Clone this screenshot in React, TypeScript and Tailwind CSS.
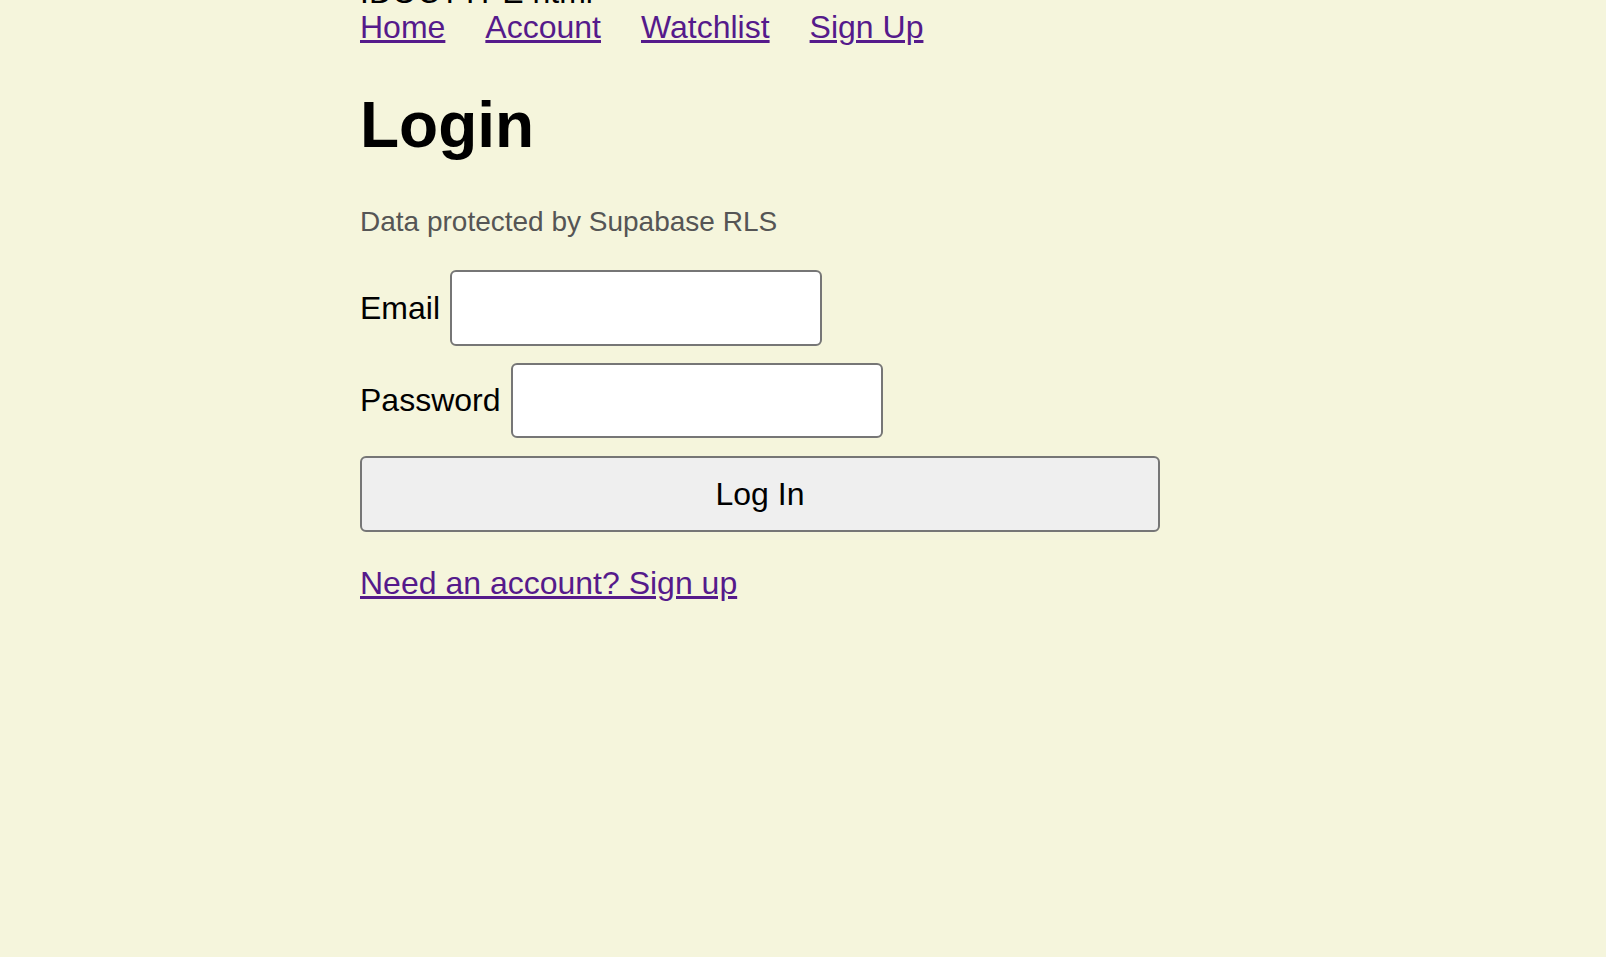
import React, { useState } from 'react';

const navLinks = ['Home', 'Account', 'Watchlist', 'Sign Up'];

export default function App() {
  const [email, setEmail] = useState('');
  const [password, setPassword] = useState('');

  return (
    <div className="min-h-screen overflow-hidden bg-[#f5f5dc] font-['Liberation_Sans',Arial,sans-serif] text-[32px] text-black">
      <div className="ml-[360px] -mt-[26px] w-[800px]">
        <div className="leading-[normal]">!DOCTYPE html</div>

        <nav className="-mt-[2px] flex gap-[40px] leading-[normal]">
          {navLinks.map((label) => (
            <a key={label} href="#" className="text-[#551a8b] underline">
              {label}
            </a>
          ))}
        </nav>

        <h1 className="mt-[43px] mb-[38px] text-[64px] font-bold leading-[1.149]">Login</h1>

        <p className="text-[28px] text-[#555]">Data protected by Supabase RLS</p>

        <form className="mt-[27px] flex flex-col gap-[17px]" onSubmit={(e) => e.preventDefault()}>
          <label className="flex items-center gap-[10px]">
            <span>Email</span>
            <input
              type="email"
              value={email}
              onChange={(e) => setEmail(e.target.value)}
              className="h-[76px] w-[372px] rounded-[6px] border-2 border-[#767676] bg-white px-[4px] text-[32px]"
            />
          </label>
          <label className="flex items-center gap-[10px]">
            <span>Password</span>
            <input
              type="password"
              value={password}
              onChange={(e) => setPassword(e.target.value)}
              className="h-[75px] w-[372px] rounded-[6px] border-2 border-[#767676] bg-white px-[4px] text-[32px]"
            />
          </label>
          <button
            type="submit"
            className="mt-px h-[76px] w-full rounded-[6px] border-2 border-[#767676] bg-[#efefef] text-[32px]"
          >
            Log In
          </button>
        </form>

        <p className="mt-[27px]">
          <a href="#" className="text-[#551a8b] underline">
            Need an account? Sign up
          </a>
        </p>
      </div>
    </div>
  );
}
